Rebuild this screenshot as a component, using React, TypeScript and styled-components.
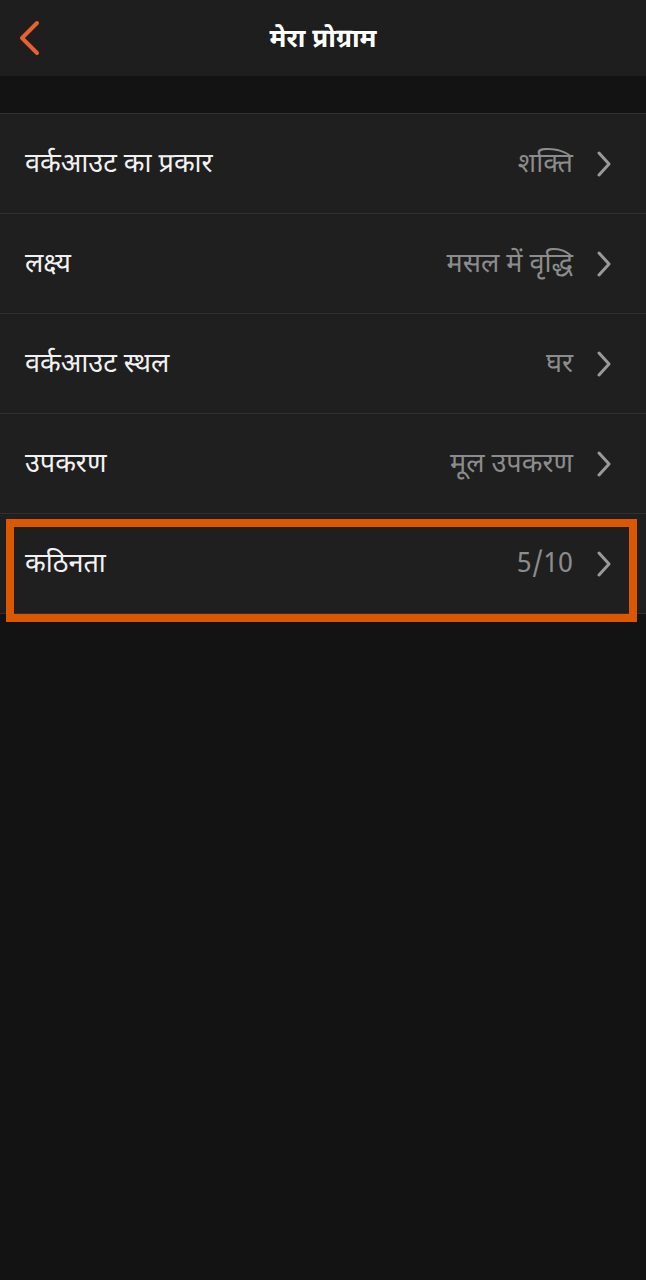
import React from "react";
import styled, { createGlobalStyle } from "styled-components";

const GlobalStyle = createGlobalStyle`
  html, body {
    margin: 0;
    padding: 0;
    background: #131313;
  }
  body {
    font-family: "Noto Sans Devanagari", "Noto Sans", "Lohit Devanagari", Roboto, sans-serif;
  }
`;

const Page = styled.div`
  width: 646px;
  min-height: 1280px;
  background: #131313;
  display: flex;
  flex-direction: column;
`;

const Header = styled.header`
  height: 76px;
  background: #1e1e1e;
  display: grid;
  grid-template-columns: 60px 1fr 60px;
  align-items: center;
`;

const BackButton = styled.button`
  background: none;
  border: 0;
  padding: 0 0 0 16px;
  height: 76px;
  display: flex;
  align-items: center;
  cursor: pointer;
`;

const Title = styled.h1`
  margin: 0;
  text-align: center;
  color: #ffffff;
  font-size: 26px;
  font-weight: 700;
  padding-top: 6px;
`;

const Spacer = styled.div`
  height: 37px;
`;

const List = styled.ul`
  list-style: none;
  margin: 0;
  padding: 0;
  border-top: 1px solid #303030;
`;

const Row = styled.li`
  position: relative;
  height: 99px;
  background: #1f1f1f;
  border-bottom: 1px solid #303030;
  display: flex;
  align-items: center;
  padding: 0 35px 0 25px;
`;

const Label = styled.span`
  flex: 1;
  color: #f2f2f2;
  font-size: 27px;
  padding-top: 4px;
`;

const Value = styled.span`
  color: #8c8c8c;
  font-size: 27px;
  margin-right: 24px;
  padding-top: 4px;
`;

const Highlight = styled.div`
  position: absolute;
  top: 5px;
  left: 6px;
  right: 9px;
  bottom: -9px;
  border: 8px solid #dc5800;
  pointer-events: none;
`;

const BackIcon = () => (
  <svg width="26" height="36" viewBox="0 0 26 36">
    <path d="M21 3 L6 18 L21 33" fill="none" stroke="#e8612e" strokeWidth="4" strokeLinecap="round" strokeLinejoin="round" />
  </svg>
);

const Chevron = () => (
  <svg width="14" height="26" viewBox="0 0 14 26">
    <path d="M2 2 L12 13 L2 24" fill="none" stroke="#9a9a9a" strokeWidth="3" strokeLinecap="round" strokeLinejoin="round" />
  </svg>
);

const items = [
  { label: "वर्कआउट का प्रकार", value: "शक्ति" },
  { label: "लक्ष्य", value: "मसल में वृद्धि" },
  { label: "वर्कआउट स्थल", value: "घर" },
  { label: "उपकरण", value: "मूल उपकरण" },
  { label: "कठिनता", value: "5/10", highlight: true },
];

export default function App() {
  return (
    <Page>
      <GlobalStyle />
      <Header>
        <BackButton aria-label="back">
          <BackIcon />
        </BackButton>
        <Title>मेरा प्रोग्राम</Title>
        <div />
      </Header>
      <Spacer />
      <List>
        {items.map((it) => (
          <Row key={it.label}>
            <Label>{it.label}</Label>
            <Value>{it.value}</Value>
            <Chevron />
            {it.highlight && <Highlight />}
          </Row>
        ))}
      </List>
    </Page>
  );
}
